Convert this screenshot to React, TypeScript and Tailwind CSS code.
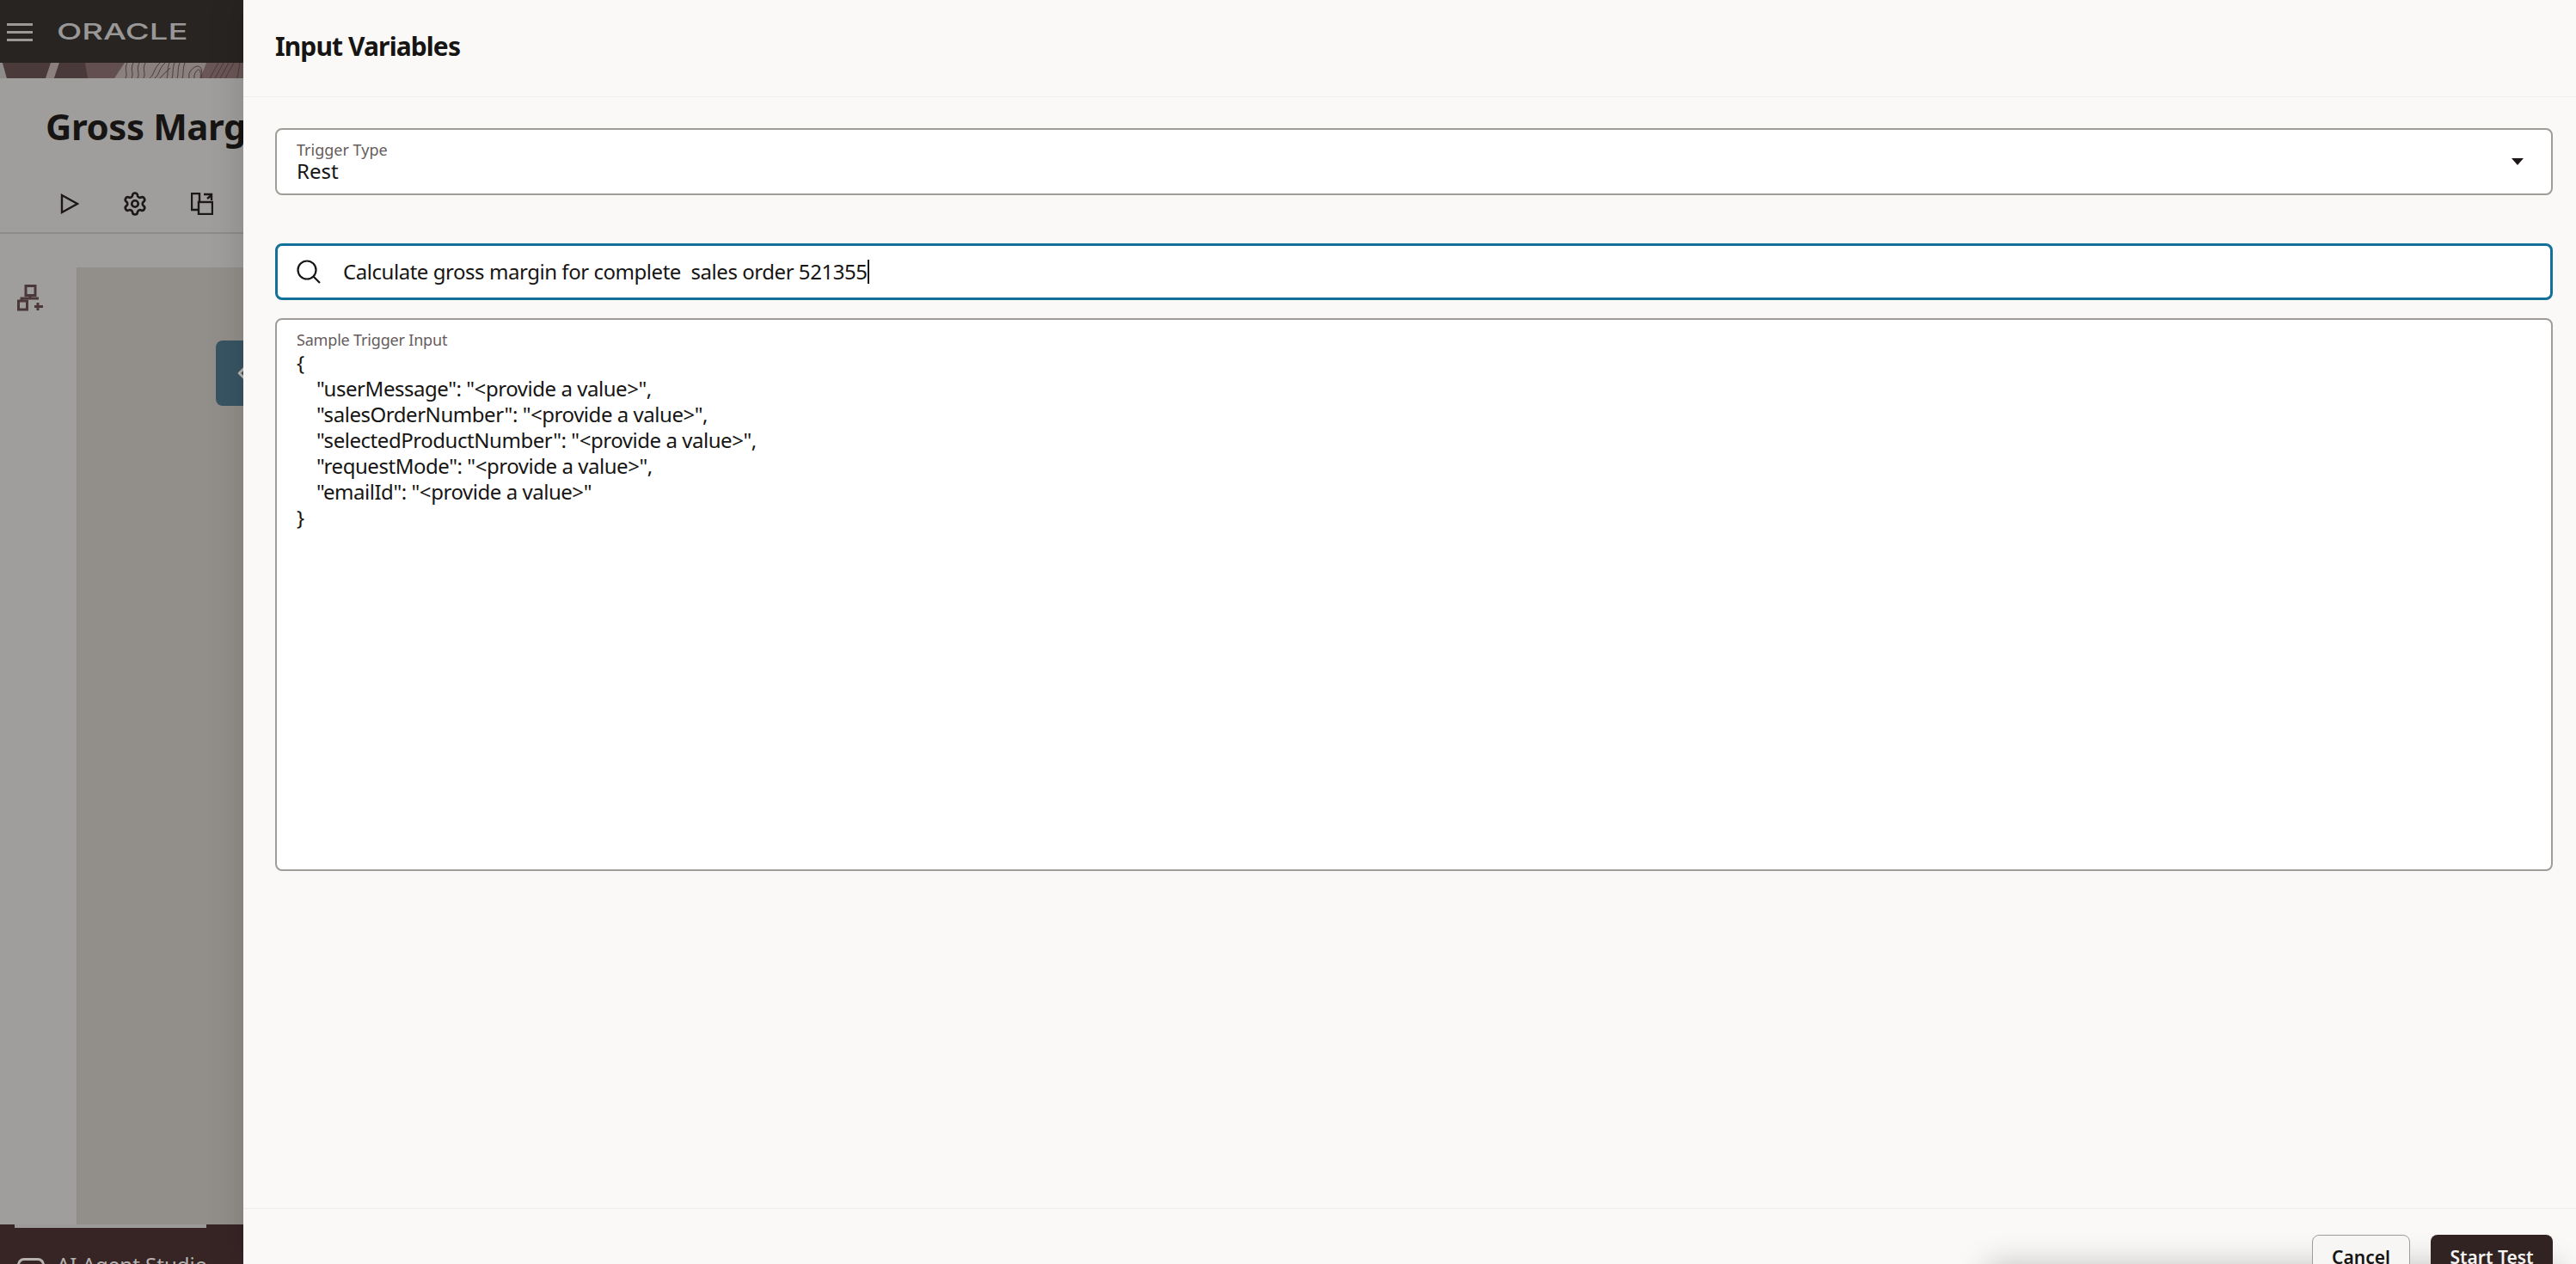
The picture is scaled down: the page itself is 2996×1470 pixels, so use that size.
import { ChevronLeft, Settings } from "lucide-react";

const sans = "font-['Noto_Sans','Open_Sans',sans-serif]";

const sampleInput = [
  { text: "{", indent: false },
  { text: '"userMessage": "<provide a value>",', indent: true },
  { text: '"salesOrderNumber": "<provide a value>",', indent: true },
  { text: '"selectedProductNumber": "<provide a value>",', indent: true },
  { text: '"requestMode": "<provide a value>",', indent: true },
  { text: '"emailId": "<provide a value>"', indent: true },
  { text: "}", indent: false },
];

const woodLines = [
  "M146 18c3-6-2-10 2-18", "M153 18c3-6-2-10 2-18", "M160 18c3-6-2-10 2-18", "M167 18c3-6-2-10 2-18",
  "M174 18c6-5 4-10 12-18", "M180 18c6-5 4-10 12-18", "M186 18c4-5 8-8 12-12", "M194 18c2-6 0-10 3-18",
  "M200 18c2-6 0-10 3-18", "M206 18c2-6 0-10 3-18", "M212 18c2-6 0-10 3-18", "M220 18c-2-8 6-14 10-14s6 6 4 14",
  "M226 18c-1-5 3-10 5-10s3 5 2 10", "M244 18l10-18", "M250 18l10-18", "M256 18l10-18", "M262 18l10-18", "M276 18l3-18",
];

const Sidebar = () => (
  <aside className="flex h-full w-[283px] shrink-0 flex-col overflow-hidden bg-[#a09e9c]">
    <header className="flex h-[73px] shrink-0 items-center bg-[#282422] pl-2">
      <div className="flex w-[30px] flex-col gap-[6px] pt-[1px]">
        <span className="h-[3px] bg-[#9a9998]" />
        <span className="h-[3px] bg-[#9a9998]" />
        <span className="h-[3px] bg-[#9a9998]" />
      </div>
      <span className="ml-[28px] origin-left scale-x-[1.47] font-['Inter',sans-serif] text-[26px] leading-none font-medium text-[#9a9897]">
        ORACLE
      </span>
    </header>

    <svg viewBox="0 0 283 18" className="h-[18px] w-[283px] shrink-0" aria-hidden="true">
      <rect width="283" height="18" fill="#644f50" />
      <path d="M0 0h3l5 18H0z" fill="#8e8c8a" />
      <path d="M3 0h60l-7 18H8z" fill="#4b3a3a" />
      <path d="M59 0h10l-6 18H53z" fill="#8b807d" />
      <path d="M69 0h30l3 18H63z" fill="#4a393a" />
      <path d="M145 0h138v18H133z" fill="#8a817e" />
      <path d="M240 0h43v18h-50z" fill="#6a5657" />
      <g fill="none" stroke="#4b3a3b" strokeWidth="1">
        {woodLines.map((d, i) => (
          <path key={i} d={d} />
        ))}
      </g>
    </svg>

    <div className={`flex h-[114px] shrink-0 items-center pb-[4px] pl-[53px] text-[42px] font-bold tracking-[-0.01em] whitespace-nowrap text-[#171514] ${sans}`}>
      Gross Margin
    </div>

    <div className="flex h-[67px] shrink-0 items-center gap-[50px] border-b-2 border-[#8e8c8a] pb-[2px] pl-[70px] text-[#1b1817]">
      <svg viewBox="0 0 22 24" className="h-[24px] w-[22px]" fill="none" stroke="currentColor" strokeWidth="2.4" aria-hidden="true">
        <path d="M2 2l18 10L2 22z" />
      </svg>
      <Settings size={30} strokeWidth={2.1} />
      <svg viewBox="0 0 26 26" className="h-[26px] w-[26px]" fill="none" stroke="currentColor" strokeWidth="2.4" aria-hidden="true">
        <path d="M9 20H1V1h9v10" />
        <rect x="9" y="11" width="16" height="14" />
        <path d="M15 2h9v7M24 3l-5 4" />
      </svg>
    </div>

    <div className="flex min-h-0 flex-1">
      <div className="w-[89px] shrink-0 pt-[59px] pl-[20px] text-[#4a383b]">
        <svg viewBox="0 0 30 31" className="h-[31px] w-[30px]" fill="none" stroke="currentColor" strokeWidth="3" aria-hidden="true">
          <rect x="10" y="1.5" width="11" height="11" />
          <path d="M15 13v3M5 18v-2h20" />
          <rect x="1.5" y="19" width="10" height="10" />
          <path d="M24 21v9M20 25.500h10" />
        </svg>
      </div>
      <div className="relative mt-[39px] flex-1 border-l border-[#8d8c8a] bg-[#928f8b]">
        <div className="absolute top-[85px] right-0 flex h-[76px] w-[32px] items-center overflow-hidden rounded-l-lg bg-[#385463] pl-[16px] text-[#b7b4b1]">
          <ChevronLeft size={30} strokeWidth={2.4} className="shrink-0" />
        </div>
      </div>
    </div>

    <footer className={`relative flex h-[46px] shrink-0 items-start gap-[14px] bg-[#372526] pt-[32px] pl-[20px] text-[24px] leading-[30px] whitespace-nowrap text-[#b5b1ae] ${sans}`}>
      <span className="absolute top-0 left-[17px] h-[4px] w-[223px] bg-[#9c9a98]" />
      <span className="mt-[7px] h-[30px] w-[32px] shrink-0 rounded-lg border-[3px] border-[#b5b1ae]" />
      AI Agent Studio
    </footer>
  </aside>
);

const InputVariables = () => (
  <main className={`relative z-10 flex h-full flex-1 flex-col overflow-hidden bg-[#faf9f7] shadow-[-6px_0_36px_rgba(0,0,0,0.12)] ${sans}`}>
    <div className="flex h-[113px] shrink-0 items-center border-b border-[#f0eeec] pb-[6px] pl-[37px]">
      <h1 className="text-[30px] font-bold tracking-[-0.03em] text-[#161513]">Input Variables</h1>
    </div>

    <div className="flex-1 pt-[36px] pr-[27px] pl-[37px]">
      <div className="flex h-[78px] items-center justify-between rounded-lg border-2 border-[#a09d99] bg-white pr-[32px] pl-[23px]">
        <div className="pb-[3px]">
          <div className="text-[18px] leading-[24px] text-[#665c5d]">Trigger Type</div>
          <div className="text-[24px] leading-[26px] text-[#161513]">Rest</div>
        </div>
        <span className="h-0 w-0 border-x-[7px] border-t-[8px] border-x-transparent border-t-[#1c1817]" />
      </div>

      <div className="mt-[56px] flex h-[66px] items-center rounded-lg border-[3px] border-[#13709a] bg-white pb-[1px] pl-[22px]">
        <svg viewBox="0 0 28 28" className="h-[28px] w-[28px] shrink-0 text-[#161513]" fill="none" stroke="currentColor" strokeWidth="2.200" aria-hidden="true">
          <circle cx="12" cy="12" r="10.500" />
          <path d="M19.500 19.500L27 27" />
        </svg>
        <div className="ml-[26px] flex items-center text-[24px] tracking-[-0.019em] whitespace-pre text-[#161513]">
          Calculate gross margin for complete  sales order 521355
          <span className="h-[28px] w-[2px] bg-[#161513]" />
        </div>
      </div>

      <div className="mt-[21px] h-[643px] rounded-lg border-2 border-[#a09d99] bg-white pt-[11px] pl-[23px]">
        <div className="text-[18px] leading-[24px] tracking-[-0.01em] text-[#665c5d]">Sample Trigger Input</div>
        {sampleInput.map((line, i) => (
          <div key={i} className={`text-[24px] leading-[30px] tracking-[-0.019em] whitespace-pre text-[#161513] ${line.indent ? "pl-[23px]" : ""}`}>
            {line.text}
          </div>
        ))}
      </div>
    </div>

    <div className="flex h-[65px] shrink-0 items-start justify-end gap-[24px] border-t border-[#f0eeec] pt-[30px] pr-[27px]">
      <button className="relative z-10 h-[54px] w-[114px] shrink-0 rounded-lg border border-[#a09d99] bg-[#f7f6f4] text-[21px] font-semibold text-[#161513]">
        Cancel
      </button>
      <button className="relative z-10 h-[54px] w-[142px] shrink-0 rounded-lg bg-[#312321] text-[21px] font-semibold text-[#f5f3f1]">
        Start Test
      </button>
    </div>

    {/* toast sitting just under the fold, only its shadow shows */}
    <div className="absolute top-[1470px] right-[20px] left-[2027px] h-[80px] rounded-lg shadow-[0_0_36px_rgba(0,0,0,0.22)]" />
  </main>
);

export default function App() {
  return (
    <div className="flex h-[1470px] w-[2996px] overflow-hidden">
      <Sidebar />
      <InputVariables />
    </div>
  );
}
